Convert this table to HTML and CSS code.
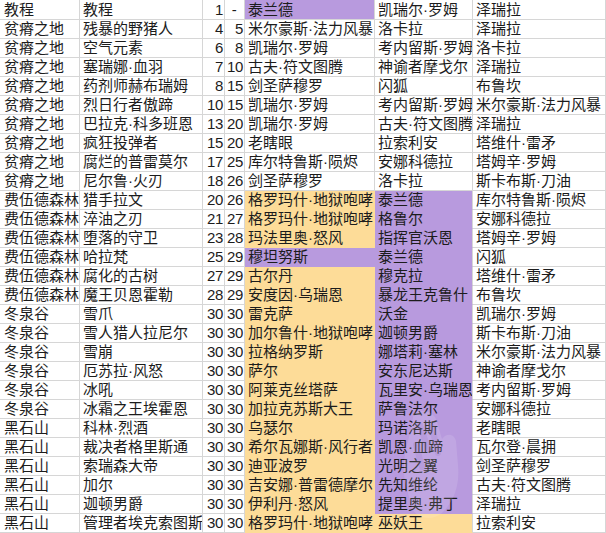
FILE: index.html
```html
<!DOCTYPE html>
<html lang="zh">
<head>
<meta charset="utf-8">
<link rel="stylesheet" href="styles.css">
</head>
<body>
<div class="sheet">
<table class="grid">
<colgroup>
<col class="c-a"><col class="c-b"><col class="c-c"><col class="c-d"><col class="c-e"><col class="c-f"><col class="c-g">
</colgroup>
<tbody>
<tr class="first"><td>教程</td><td>教程</td><td class="n">1</td><td class="n dash">-</td><td class="p pb">泰兰德</td><td>凯瑞尔·罗姆</td><td>泽瑞拉</td></tr>
<tr><td>贫瘠之地</td><td>残暴的野猪人</td><td class="n">4</td><td class="n">5</td><td>米尔豪斯·法力风暴</td><td>洛卡拉</td><td>泽瑞拉</td></tr>
<tr><td>贫瘠之地</td><td>空气元素</td><td class="n">6</td><td class="n">8</td><td>凯瑞尔·罗姆</td><td>考内留斯·罗姆</td><td>洛卡拉</td></tr>
<tr><td>贫瘠之地</td><td>塞瑞娜·血羽</td><td class="n">7</td><td class="n">10</td><td>古夫·符文图腾</td><td>神谕者摩戈尔</td><td>泽瑞拉</td></tr>
<tr><td>贫瘠之地</td><td>药剂师赫布瑞姆</td><td class="n">8</td><td class="n">15</td><td>剑圣萨穆罗</td><td>闪狐</td><td>布鲁坎</td></tr>
<tr><td>贫瘠之地</td><td>烈日行者傲蹄</td><td class="n">10</td><td class="n">15</td><td>凯瑞尔·罗姆</td><td>考内留斯·罗姆</td><td>米尔豪斯·法力风暴</td></tr>
<tr><td>贫瘠之地</td><td>巴拉克·科多班恩</td><td class="n">13</td><td class="n">20</td><td>凯瑞尔·罗姆</td><td>古夫·符文图腾</td><td>泽瑞拉</td></tr>
<tr><td>贫瘠之地</td><td>疯狂投弹者</td><td class="n">15</td><td class="n">20</td><td>老瞎眼</td><td>拉索利安</td><td>塔维什·雷矛</td></tr>
<tr><td>贫瘠之地</td><td>腐烂的普雷莫尔</td><td class="n">17</td><td class="n">25</td><td>库尔特鲁斯·陨烬</td><td>安娜科德拉</td><td>塔姆辛·罗姆</td></tr>
<tr><td>贫瘠之地</td><td>尼尔鲁·火刃</td><td class="n">18</td><td class="n">26</td><td>剑圣萨穆罗</td><td>洛卡拉</td><td>斯卡布斯·刀油</td></tr>
<tr><td>费伍德森林</td><td>猎手拉文</td><td class="n">20</td><td class="n">26</td><td class="y jr">格罗玛什·地狱咆哮</td><td class="p">泰兰德</td><td>库尔特鲁斯·陨烬</td></tr>
<tr><td>费伍德森林</td><td>淬油之刃</td><td class="n">21</td><td class="n">27</td><td class="y jr">格罗玛什·地狱咆哮</td><td class="p">格鲁尔</td><td>安娜科德拉</td></tr>
<tr><td>费伍德森林</td><td>堕落的守卫</td><td class="n">23</td><td class="n">28</td><td class="y jr">玛法里奥·怒风</td><td class="p">指挥官沃恩</td><td>塔姆辛·罗姆</td></tr>
<tr><td>费伍德森林</td><td>哈拉梵</td><td class="n">25</td><td class="n">29</td><td class="p jr">穆坦努斯</td><td class="p">泰兰德</td><td>闪狐</td></tr>
<tr><td>费伍德森林</td><td>腐化的古树</td><td class="n">27</td><td class="n">29</td><td class="y jr">古尔丹</td><td class="p">穆克拉</td><td>塔维什·雷矛</td></tr>
<tr><td>费伍德森林</td><td>魔王贝恩霍勒</td><td class="n">28</td><td class="n">29</td><td class="y jr">安度因·乌瑞恩</td><td class="p">暴龙王克鲁什</td><td>布鲁坎</td></tr>
<tr><td>冬泉谷</td><td>雪爪</td><td class="n">30</td><td class="n">30</td><td class="y jr">雷克萨</td><td class="p">沃金</td><td>凯瑞尔·罗姆</td></tr>
<tr><td>冬泉谷</td><td>雪人猎人拉尼尔</td><td class="n">30</td><td class="n">30</td><td class="y jr">加尔鲁什·地狱咆哮</td><td class="p">迦顿男爵</td><td>斯卡布斯·刀油</td></tr>
<tr><td>冬泉谷</td><td>雪崩</td><td class="n">30</td><td class="n">30</td><td class="y jr">拉格纳罗斯</td><td class="p">娜塔莉·塞林</td><td>米尔豪斯·法力风暴</td></tr>
<tr><td>冬泉谷</td><td>厄苏拉·风怒</td><td class="n">30</td><td class="n">30</td><td class="y jr">萨尔</td><td class="p">安东尼达斯</td><td>神谕者摩戈尔</td></tr>
<tr><td>冬泉谷</td><td>冰吼</td><td class="n">30</td><td class="n">30</td><td class="y jr">阿莱克丝塔萨</td><td class="p">瓦里安·乌瑞恩</td><td>考内留斯·罗姆</td></tr>
<tr><td>冬泉谷</td><td>冰霜之王埃霍恩</td><td class="n">30</td><td class="n">30</td><td class="y jr">加拉克苏斯大王</td><td class="p">萨鲁法尔</td><td>安娜科德拉</td></tr>
<tr><td>黑石山</td><td>科林·烈酒</td><td class="n">30</td><td class="n">30</td><td class="y jr">乌瑟尔</td><td class="p">玛诺洛斯</td><td>老瞎眼</td></tr>
<tr><td>黑石山</td><td>裁决者格里斯通</td><td class="n">30</td><td class="n">30</td><td class="y jr">希尔瓦娜斯·风行者</td><td class="p">凯恩·血蹄</td><td>瓦尔登·晨拥</td></tr>
<tr><td>黑石山</td><td>索瑞森大帝</td><td class="n">30</td><td class="n">30</td><td class="y jr">迪亚波罗</td><td class="p">光明之翼</td><td>剑圣萨穆罗</td></tr>
<tr><td>黑石山</td><td>加尔</td><td class="n">30</td><td class="n">30</td><td class="y jr">吉安娜·普雷德摩尔</td><td class="p">先知维纶</td><td>古夫·符文图腾</td></tr>
<tr><td>黑石山</td><td>迦顿男爵</td><td class="n">30</td><td class="n">30</td><td class="y jr">伊利丹·怒风</td><td class="p">提里奥·弗丁</td><td>泽瑞拉</td></tr>
<tr><td>黑石山</td><td>管理者埃克索图斯</td><td class="n">30</td><td class="n">30</td><td class="y jr">格罗玛什·地狱咆哮</td><td class="y">巫妖王</td><td>拉索利安</td></tr>
</tbody>
</table>
<svg class="watermark" width="80" height="120" viewBox="0 0 80 120" aria-hidden="true">
<path d="M22 8 C30 4 40 6 44 14 L50 34 C54 28 62 28 64 36 L66 60 C68 80 62 96 50 108 C40 116 26 114 20 104 L14 80 C10 66 12 50 16 36 Z" fill="#ffffff" opacity="0.12"/>
<path d="M28 20 L36 44 M40 22 L46 48 M24 40 L30 62" stroke="#8f6fc4" stroke-width="6" stroke-linecap="round" opacity="0.18" fill="none"/>
</svg>
</div>
</body>
</html>
```
FILE: styles.css
```css
html, body {
  margin: 0;
  padding: 0;
  background: #ffffff;
}

.sheet {
  position: relative;
  width: 606px;
  height: 533px;
  overflow: hidden;
}

.grid {
  border-collapse: separate;
  border-spacing: 0;
  table-layout: fixed;
  width: 606px;
  font-family: "Liberation Sans", "Noto Sans CJK SC", sans-serif;
  font-size: 15px;
  color: #1c1c1c;
}

.c-a { width: 80px; }
.c-b { width: 123px; }
.c-c { width: 22px; }
.c-d { width: 20px; }
.c-e { width: 130px; }
.c-f { width: 98px; }
.c-g { width: 133px; }

.grid td {
  height: 18px;
  padding: 0 0 0 3px;
  line-height: 18px;
  white-space: nowrap;
  overflow: hidden;
  border-right: 1px solid #d6d6d6;
  border-bottom: 1px solid #d6d6d6;
  vertical-align: middle;
}

.grid tr.first td {
  height: 19px;
}

.grid td:first-child {
  padding-left: 4px;
}

.grid td.n {
  text-align: right;
  padding: 0 1px 0 0;
  letter-spacing: -0.3px;
}

.grid td.dash {
  text-align: center;
}

.grid td.y {
  background: #fddc98;
  border-bottom-color: transparent;
}

.grid td.p {
  background: #b89ade;
  border-bottom-color: transparent;
}

.grid td.pb {
  border-bottom-color: #d6d6d6;
}

.grid td.jr {
  border-right-color: transparent;
}

.watermark {
  position: absolute;
  left: 392px;
  top: 405px;
}
```
